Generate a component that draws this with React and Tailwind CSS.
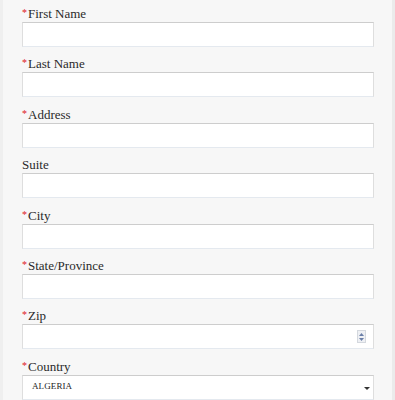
import React from 'react';

const fields = [
  { label: 'First Name', required: true },
  { label: 'Last Name', required: true },
  { label: 'Address', required: true },
  { label: 'Suite', required: false },
  { label: 'City', required: true },
  { label: 'State/Province', required: true },
  { label: 'Zip', required: true, spinner: true },
];

const inputBox =
  'h-[25px] w-[352px] bg-white border border-[#dedede] border-t-[#cdcdcd] border-b-[#e4e9ef]';

const Label = ({ text, required }) => (
  <div className="h-[17px] leading-[17px] text-[13px] text-[#2a2a2a] flex items-start">
    {required && <span className="text-[#e0201c] text-[10px] leading-[12px] mt-[2px] mr-[1px]">*</span>}
    <span>{text}</span>
  </div>
);

const Spinner = () => (
  <div className="absolute right-[7px] top-[5px] w-[9px] h-[13px] bg-[#eef0f4] border border-[#d4d8de] flex flex-col items-center justify-center gap-[2px]">
    <svg width="5" height="3" viewBox="0 0 5 3"><path d="M0 3 L2.5 0 L5 3 Z" fill="#6b7fa8" /></svg>
    <svg width="5" height="3" viewBox="0 0 5 3"><path d="M0 0 L2.5 3 L5 0 Z" fill="#6b7fa8" /></svg>
  </div>
);

const App = () => {
  return (
    <div
      className="w-[395px] h-[400px] overflow-hidden bg-[#f7f7f7] border-l-[3px] border-l-[#efefef] border-r-[3px] border-r-[#ebebeb]"
      style={{ fontFamily: '"Liberation Serif", serif' }}
    >
      <div className="pl-[19px] pt-[5px] flex flex-col gap-[8.4px]">
        {fields.map((f) => (
          <div key={f.label}>
            <Label text={f.label} required={f.required} />
            <div className={`${inputBox} relative`}>{f.spinner && <Spinner />}</div>
          </div>
        ))}
        <div>
          <Label text="Country" required />
          <div className={`${inputBox} relative flex items-center pl-[9px]`}>
            <span className="text-[9px] text-[#222] tracking-[0.1px]">ALGERIA</span>
            <svg className="absolute right-[3px] top-[11px]" width="6" height="3" viewBox="0 0 6 3">
              <path d="M0 0 L6 0 L3 3 Z" fill="#333" />
            </svg>
          </div>
        </div>
      </div>
    </div>
  );
};

export default App;
